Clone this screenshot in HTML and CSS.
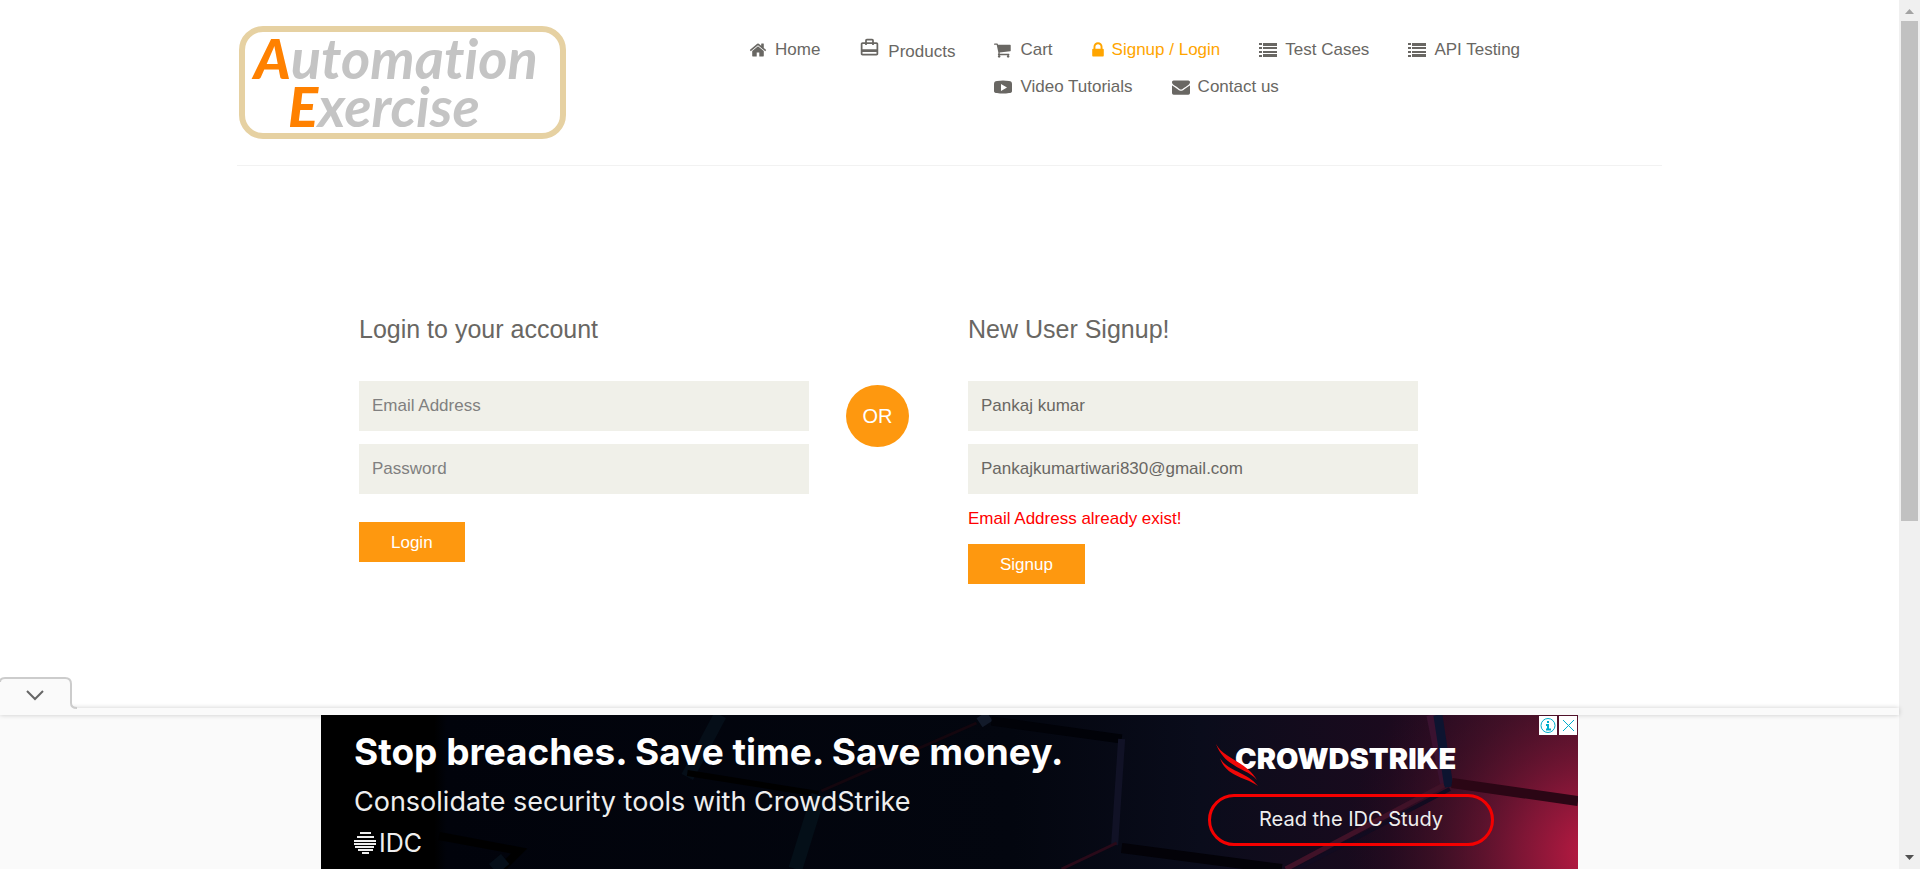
FILE: index.html
```html
<!DOCTYPE html>
<html lang="en">
<head>
<meta charset="utf-8">
<title>Automation Exercise - Signup / Login</title>
<link rel="stylesheet" href="styles.css">
</head>
<body>
<div class="page">
  <div class="content">
    <header class="container">
      <div class="header-row">
        <a class="logo" href="#" aria-label="Automation Exercise">
          <span class="logo-line"><b>A</b>utomation</span>
          <span class="logo-line logo-second"><b>E</b>xercise</span>
        </a>
        <nav>
          <ul class="menu">
            <li><a href="#"><svg width="18" height="18" viewBox="0 0 1792 1792"><path d="M1472 992v480q0 26-19 45t-45 19h-384v-384h-256v384h-384q-26 0-45-19t-19-45v-480q0-1 .5-3t.5-3l575-474 575 474q1 2 1 6zm223-69l-62 74q-8 9-21 11h-3q-13 0-21-7l-692-577-692 577q-12 8-24 7-13-2-21-11l-62-74q-8-10-7-23.5t11-21.5l719-599q32-26 76-26t76 26l244 204v-195q0-14 9-23t23-9h192q14 0 23 9t9 23v408l219 182q10 8 11 21.5t-7 23.5z"/></svg>Home</a></li>
            <li class="tall"><a href="#"><svg width="21" height="21" viewBox="0 0 24 24"><path d="M20 6h-3V4c0-1.11-.89-2-2-2H9c-1.11 0-2 .89-2 2v2H4c-1.11 0-2 .89-2 2v11c0 1.11.89 2 2 2h16c1.11 0 2-.89 2-2V8c0-1.11-.89-2-2-2zM9 4h6v2H9V4zm11 15H4v-2h16v2zm0-5H4V8h3v1h2V8h6v1h2V8h3v6z"/></svg><span>Products</span></a></li>
            <li><a href="#"><svg width="18" height="18" viewBox="64 0 1792 1792"><path d="M704 1536q0 52-38 90t-90 38-90-38-38-90 38-90 90-38 90 38 38 90zm896 0q0 52-38 90t-90 38-90-38-38-90 38-90 90-38 90 38 38 90zm128-1088v512q0 24-16.5 42.5t-40.5 21.5l-1044 122q13 60 13 70 0 16-24 64h920q26 0 45 19t19 45-19 45-45 19h-1024q-26 0-45-19t-19-45q0-11 8-31.5t16-36 21.5-40 15.5-29.5l-177-823h-204q-26 0-45-19t-19-45 19-45 45-19h256q16 0 28.5 6.5t19.5 15.5 13 24.5 8 26 5.5 29.5 4.5 26h1201q26 0 45 19t19 45z"/></svg>Cart</a></li>
            <li><a class="active" href="#"><svg width="12" height="18" viewBox="320 0 1152 1792"><path d="M640 768h512v-192q0-106-75-181t-181-75-181 75-75 181v192zm832 96v576q0 40-28 68t-68 28h-960q-40 0-68-28t-28-68v-576q0-40 28-68t68-28h32v-192q0-184 132-316t316-132 316 132 132 316v192h32q40 0 68 28t28 68z"/></svg>Signup / Login</a></li>
            <li><a href="#"><svg width="18" height="18" viewBox="0 0 18 18"><path d="M0 2h3v2H0zM4 2h14v3H4zM0 6h3v2H0zM4 6h14v2H4zM0 10h3v2H0zM4 10h14v2H4zM0 14h3v2H0zM4 13h14v3H4z"/></svg>Test Cases</a></li>
            <li><a href="#"><svg width="18" height="18" viewBox="0 0 18 18"><path d="M0 2h3v2H0zM4 2h14v3H4zM0 6h3v2H0zM4 6h14v2H4zM0 10h3v2H0zM4 10h14v2H4zM0 14h3v2H0zM4 13h14v3H4z"/></svg>API Testing</a></li>
            <li><a href="#"><svg width="18" height="18" viewBox="0 0 18 18"><path fill-rule="evenodd" d="M3 3Q9 2 15 3Q18 3 18 6V13Q18 15 15 15Q9 16 3 15Q0 15 0 13V6Q0 3 3 3ZM7 6V13L13 9.500Z"/></svg>Video Tutorials</a></li>
            <li><a href="#"><svg width="18" height="18" viewBox="0 0 1792 1792"><path d="M1792 710v794q0 66-47 113t-113 47h-1472q-66 0-113-47t-47-113v-794q44 49 101 87 362 246 497 345 57 42 92.500 65.500t94.500 48 110 24.500h2q51 0 110-24.500t94.500-48 92.500-65.500q170-123 498-345 57-39 100-87zm0-294q0 79-49 151t-122 123q-376 261-468 325-10 7-42.500 31t-54 38.500-52 32.500-57.500 27-50 9h-2q-23 0-50-9t-57.500-27-52-32.500-54-38.500-42.500-31q-91-64-262-182.500t-205-142.500q-62-42-117-115.500t-55-136.500q0-78 41.500-130t118.500-52h1472q65 0 112.500 47t47.500 113z"/></svg>Contact us</a></li>
          </ul>
        </nav>
      </div>
    </header>
    <main class="container">
      <div class="forms">
        <form class="login-form">
          <h2>Login to your account</h2>
          <input type="email" placeholder="Email Address" aria-label="Email Address">
          <input type="password" placeholder="Password" aria-label="Password">
          <button class="btn login-btn" type="button">Login</button>
        </form>
        <div class="or">OR</div>
        <form class="signup-form">
          <h2>New User Signup!</h2>
          <input type="text" value="Pankaj kumar" aria-label="Name">
          <input type="email" value="Pankajkumartiwari830@gmail.com" aria-label="Email Address">
          <p class="error">Email Address already exist!</p>
          <button class="btn" type="button">Signup</button>
        </form>
      </div>
    </main>
  </div>
  <aside class="ad-bar">
    <button class="ad-toggle" type="button" aria-label="Hide ad">
      <svg width="78" height="38" viewBox="0 0 78 38"><path class="tab" d="M0 5Q0 1 5 1H65Q71 1 71 7V26Q71 31 76 31H78V38H0Z"/><path class="tab-edge" d="M0 5Q0 1 5 1H65Q71 1 71 7V26Q71 31 77 31"/><path class="chevron" d="M27 14L35 22L43 14"/></svg>
    </button>
    <div class="ad-strip"></div>
    <div class="ad">
      <svg class="ad-art" viewBox="0 0 1256 154" preserveAspectRatio="none" aria-hidden="true">
        <defs>
          <linearGradient id="base"><stop offset="0" stop-color="#000"/><stop offset=".09" stop-color="#000"/><stop offset=".1" stop-color="#01030b"/><stop offset=".55" stop-color="#03060f"/><stop offset=".7" stop-color="#0a0c1b"/><stop offset=".85" stop-color="#1b0a1e"/><stop offset="1" stop-color="#41102a"/></linearGradient>
          <radialGradient id="glow" gradientUnits="userSpaceOnUse" cx="1275" cy="140" r="250"><stop offset="0" stop-color="#c31a44"/><stop offset=".3" stop-color="#8c1738" stop-opacity=".85"/><stop offset=".65" stop-color="#501228" stop-opacity=".5"/><stop offset="1" stop-color="#300a20" stop-opacity="0"/></radialGradient>
        </defs>
        <rect width="1256" height="154" fill="url(#base)"/>
        <rect width="1256" height="154" fill="url(#glow)"/>
        <g fill="none">
          <path d="M118 121L198 136L180 154" stroke="#000" stroke-width="8"/>
          <path d="M172 154L184 144" stroke="#050e18" stroke-width="13"/>
          <path d="M399 0L366 62" stroke="#050e18" stroke-width="13"/>
          <path d="M366 58L497 79" stroke="#000" stroke-width="6"/>
          <path d="M497 80L474 154" stroke="#040f18" stroke-width="14"/>
          <path d="M500 76L655 8" stroke="#14060e" stroke-width="3"/>
          <path d="M660 0L666 9" stroke="#121a2a" stroke-width="12"/>
          <path d="M670 6L800 24" stroke="#010208" stroke-width="9"/>
          <path d="M800 24L793 130" stroke="#111226" stroke-width="7"/>
          <path d="M795 128L740 154" stroke="#290a19" stroke-width="3"/>
          <path d="M800 133L960 154" stroke="#030208" stroke-width="10"/>
          <path d="M1109 0L1123 70" stroke="#3a1230" stroke-width="9"/>
          <path d="M1116 0L1127 72" stroke="#0d1430" stroke-width="9"/>
          <path d="M1130 68L1256 86" stroke="#2b0615" stroke-width="10"/>
          <path d="M1122 70L964 154" stroke="#401228" stroke-width="5"/>
          <path d="M1128 74L975 154" stroke="#120b20" stroke-width="4"/>
        </g>
      </svg>
      <div class="ad-copy">
        <p class="ad-title">Stop breaches. Save time. Save money.</p>
        <p class="ad-sub">Consolidate security tools with CrowdStrike</p>
        <p class="idc"><svg width="23" height="22" viewBox="0 0 23 22"><path d="M6 1H17M3 5H20M0 9H22M0 12H22M1 15H20M4 18H19M8 21H15" stroke="#eee" stroke-width="2"/></svg>IDC</p>
      </div>
      <div class="ad-brand">
        <p class="crowd"><svg width="42" height="42" viewBox="0 0 42 42"><path d="M0 0C8 15 30 17 41 36C31 24 9 24 0 0ZM4 14C12 28 30 27 42 42C30 33 10 33 4 14Z" fill="#f00808"/></svg>CROWDSTRIKE</p>
        <a class="cta" href="#">Read the IDC Study</a>
      </div>
      <div class="choices">
        <button type="button" aria-label="Ad information"><svg width="18" height="19" viewBox="0 0 18 19"><circle cx="9" cy="9.500" r="7"/><path d="M9 5V7M7 9H9V13M7 13.500H12" stroke-width="2"/></svg></button>
        <button type="button" aria-label="Close ad"><svg width="18" height="19" viewBox="0 0 18 19"><path d="M4 4L15 15M15 4L4 15"/></svg></button>
      </div>
    </div>
  </aside>
</div>
<div class="scrollbar" aria-hidden="true">
  <svg width="21" height="21" viewBox="0 0 21 21"><path d="M6 14L10.500 9L15 14Z" fill="#a3a3a3"/></svg>
  <div class="track"><div class="thumb"></div></div>
  <svg width="21" height="21" viewBox="0 0 21 21"><path d="M6 7H15L10.500 12Z" fill="#505050"/></svg>
</div>
</body>
</html>
```
FILE: styles.css
```css
* { box-sizing: border-box; }
body {
  margin: 0;
  height: 100vh;
  display: flex;
  overflow: hidden;
  background: #fff;
  color: #696763;
  font-family: "Liberation Sans", Arial, sans-serif;
  font-size: 17px;
  line-height: 25px;
}
h2, p, ul { margin: 0; padding: 0; font-weight: 400; }
svg { display: block; flex: none; }
.page { flex: 1; min-width: 0; display: flex; flex-direction: column; }
.content { flex: 1; min-height: 0; overflow: hidden; }
.container { max-width: 1463px; margin: 0 auto; padding: 0 19px; }

/* Header */
.header-row {
  display: flex;
  justify-content: space-between;
  align-items: flex-start;
  padding: 26px 0;
  border-bottom: 1px solid #f2f2f2;
}
.logo {
  width: 327px;
  height: 113px;
  margin-left: 2px;
  padding: 2px 0 0 9px;
  border: 6px solid #e6d1a2;
  border-radius: 24px;
  color: #c4c4c4;
  font: italic 700 56px/48px Lato, sans-serif;
  font-variant-ligatures: none;
  text-decoration: none;
}
.logo-line { display: block; }
.logo-second { padding-left: 34px; }
.logo b { color: #ff8100; }
nav { width: 913px; }
.menu { list-style: none; padding-top: 11px; }
.menu li { float: left; height: 37px; margin-right: 39px; }
.menu .tall { height: 40px; }
.menu a {
  display: flex;
  align-items: center;
  gap: 8px;
  color: #696763;
  text-decoration: none;
}
.menu svg { fill: currentColor; }
.menu .tall span { padding-top: 2px; }
.menu .tall a { align-items: flex-start; }
.menu .active { color: #ffa500; }

/* Forms */
.forms { display: flex; align-items: flex-start; padding: 148px 0 0 122px; }
.login-form, .signup-form { width: 450px; }
.or {
  width: 63px;
  height: 62px;
  margin: 71px 59px 0 37px;
  border-radius: 50%;
  background: #fe980f;
  color: #fff;
  font-size: 20px;
  line-height: 62px;
  text-align: center;
}
h2 { margin-bottom: 37px; font-size: 25px; line-height: 30px; }
input {
  display: block;
  width: 100%;
  height: 50px;
  margin-bottom: 13px;
  padding: 0 13px;
  border: 0;
  outline: 0;
  background: #f0f0e9;
  color: #696763;
  font: inherit;
}
input::placeholder { color: #808080; opacity: 1; }
.btn {
  display: block;
  height: 40px;
  padding: 0 32px;
  border: 0;
  background: #fe980f;
  color: #fff;
  font: inherit;
}
.login-btn { margin-top: 28px; }
.error { margin: -1px 0 13px; color: #f00; }

/* Anchored ad */
.ad-bar { position: relative; background: #fafafa; }
.ad-toggle {
  position: absolute;
  left: 0;
  bottom: 100%;
  margin-bottom: -7px;
  padding: 0;
  border: 0;
  background: none;
}
.tab { fill: #fafafa; }
.tab-edge { fill: none; stroke: #ccc; stroke-width: 2; }
.chevron { fill: none; stroke: #666; stroke-width: 2; }
.ad-strip { height: 7px; box-shadow: 0 0 5px rgba(0, 0, 0, .2); background: #fafafa; }
.ad {
  position: relative;
  display: flex;
  justify-content: space-between;
  width: 1257px;
  max-width: 100%;
  height: 154px;
  margin: 0 auto;
  padding: 0 84px 0 33px;
  overflow: hidden;
  background: #000;
  color: #fff;
  font-family: Inter, sans-serif;
}
.ad-art { position: absolute; inset: 0; width: 100%; height: 100%; }
.ad-copy, .ad-brand { position: relative; }
.ad-copy { padding-top: 13px; }
.ad-title { font-size: 37px; font-weight: 700; line-height: 48px; }
.ad-sub { padding-top: 8px; color: #eee; font-size: 27px; line-height: 36px; }
.idc { display: flex; align-items: center; gap: 2px; padding-top: 8px; color: #eee; font-size: 25px; line-height: 30px; }
.ad-brand { width: 286px; padding-top: 26px; }
.crowd { display: flex; padding-left: 8px; height: 53px; font-size: 29px; font-weight: 900; line-height: 36px; }
.crowd svg { margin: 3px -23px 0 0; position: relative; z-index: 1; }
.cta {
  display: block;
  height: 52px;
  border: 3px solid #f40000;
  border-radius: 26px;
  color: #eee;
  font-size: 20px;
  line-height: 44px;
  text-align: center;
  text-decoration: none;
}
.choices { position: absolute; top: 1px; right: 1px; display: flex; gap: 2px; }
.choices button { padding: 0; border: 0; background: #fff; }
.choices svg { fill: none; stroke: #00aecd; stroke-width: 1; }

/* Window scrollbar */
.scrollbar { display: flex; flex-direction: column; width: 21px; background: #f0f0f0; }
.track { flex: 1; padding: 0 2px; }
.thumb { height: 60.5%; background: #c1c1c1; }
```
